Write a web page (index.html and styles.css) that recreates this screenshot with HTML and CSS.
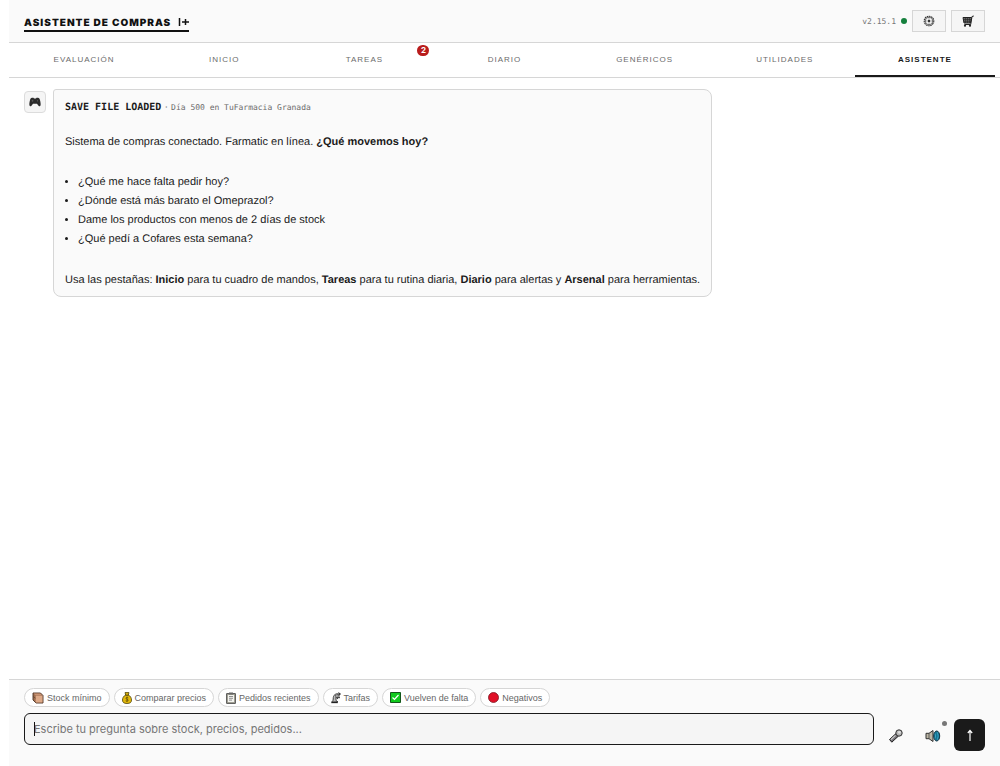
FILE: index.html
```html
<!DOCTYPE html>
<html lang="es">
<head>
<meta charset="utf-8">
<meta name="viewport" content="width=device-width, initial-scale=1">
<title>Asistente de compras</title>
<link rel="stylesheet" href="styles.css">
</head>
<body>
<div class="app">
  <header class="topbar">
    <h1 class="brand"><span>ASISTENTE DE COMPRAS</span>
      <svg class="brand-mark" width="11" height="10" viewBox="0 0 11 10" aria-hidden="true"><path d="M1.500 0v8M4 4h7M7.500 1v6" stroke="currentColor" stroke-width="1.500" fill="none"/></svg>
    </h1>
    <div class="tools">
      <span class="version">v2.15.1</span>
      <span class="status"></span>
      <button class="tool" type="button" aria-label="Ajustes">
        <svg width="12" height="12" viewBox="0 0 12 12" fill="none" stroke="#333"><circle cx="6" cy="6" r="4.800" stroke-width="1.100" stroke-dasharray="1.600 .6"/><circle cx="6" cy="6" r="3.800" stroke-width=".7"/><circle cx="6" cy="6" r="1.200" fill="#333" stroke="none"/><path d="M6 2.300v2.500M6 7.200v2.500M2.300 6h2.500M7.200 6h2.500" stroke-width=".4"/></svg>
      </button>
      <button class="tool" type="button" aria-label="Carrito">
        <svg width="12" height="12" viewBox="0 0 12 12" fill="none" stroke="#222"><path d="M1 2.500h8.500L8.500 8H2z" fill="#888"/><path d="M1.300 4.300h7.700M1.700 6.200h7M3.300 2.500V8M5.300 2.500V8M7.300 2.500V8" stroke-width=".8"/><path d="M11.800 1 10 1.500 8.700 9.500H2.500"/><circle cx="3" cy="10.700" r="1.100" fill="#222" stroke="none"/><circle cx="8" cy="10.700" r="1.100" fill="#222" stroke="none"/></svg>
      </button>
    </div>
  </header>

  <nav class="tabs">
    <button class="tab" type="button">EVALUACIÓN</button>
    <button class="tab" type="button">INICIO</button>
    <button class="tab" type="button">TAREAS<span class="badge">2</span></button>
    <button class="tab" type="button">DIARIO</button>
    <button class="tab" type="button">GENÉRICOS</button>
    <button class="tab" type="button">UTILIDADES</button>
    <button class="tab tab-active" type="button">ASISTENTE</button>
  </nav>

  <main class="chat">
    <div class="avatar">
      <svg width="12" height="10" viewBox="0 0 12 10"><path d="M3 .8h1.500l.5.600h2l.5-.6H9c1.200 0 1.700 1 2.100 2.800.4 1.700.8 3.700.4 5-.4 1-1.400.8-2 .1L8 6.800H4L2.500 8.700c-.6.7-1.600.9-2-.1-.4-1.300 0-3.300.4-5C1.300 1.800 1.800.8 3 .8z" fill="#2b2b2b"/><path d="M2.500 3.800h2M3.500 2.800v2" stroke="#666" stroke-width=".6"/><circle cx="8.500" cy="3.800" r=".6" fill="#666"/></svg>
    </div>
    <article class="message">
      <p class="message-head"><strong>SAVE FILE LOADED</strong> · <small>Día 500 en TuFarmacia Granada</small></p>
      <p class="message-intro">Sistema de compras conectado. Farmatic en línea. <strong>¿Qué movemos hoy?</strong></p>
      <ul class="examples">
        <li>¿Qué me hace falta pedir hoy?</li>
        <li>¿Dónde está más barato el Omeprazol?</li>
        <li>Dame los productos con menos de 2 días de stock</li>
        <li>¿Qué pedí a Cofares esta semana?</li>
      </ul>
      <p class="message-foot">Usa las pestañas: <strong>Inicio</strong> para tu cuadro de mandos, <strong>Tareas</strong> para tu rutina diaria, <strong>Diario</strong> para alertas y <strong>Arsenal</strong> para herramientas.</p>
    </article>
  </main>

  <footer class="composer">
    <div class="chips">
      <button class="chip" type="button"><svg width="12" height="12" viewBox="0 0 12 12"><path d="M1 1h7.500L11 3.500V11H4L1 8z" fill="#a06f50" stroke="#4a3023" stroke-width=".9"/><path d="M1.500 1.500h6.800l1.700 1.700H3.500z" fill="#c99273"/><path d="M3.700 3.700h6.800v6.800H3.700z" fill="#dda988"/><path d="M1.200 4.500l2.300 1.700" stroke="#5c3d2c" stroke-width=".7"/></svg>Stock mínimo</button>
      <button class="chip" type="button"><svg width="10" height="12" viewBox="0 0 10 12"><path d="M3 .6h4L6.300 3C8.500 4 9.500 6 9.500 8c0 2.500-1.500 3.500-4.500 3.500S.5 10.500.5 8c0-2 1-4 3.200-5z" fill="#e2b80c" stroke="#4d4108" stroke-width=".8"/><path d="M3.300 3.200h3.400" stroke="#4d4108"/><path d="M6.300 5.800C5.500 5 4 5.300 4 6.300s2.200.8 2.200 1.900S4.300 9.500 3.700 8.800M5 4.700v5" stroke="#5d4d08" stroke-width=".8" fill="none"/></svg>Comparar precios</button>
      <button class="chip" type="button"><svg width="10" height="12" viewBox="0 0 10 12"><path d="M.6 1.600h8.800v9.800H.6z" fill="#aaa99c" stroke="#444" stroke-width=".9"/><path d="M2 3h6v7H2z" fill="#f4f4f0"/><path d="M3 .5h4v2H3z" fill="#666"/><path d="M3 4.500h4M3 6.300h4M3 8.100h3" stroke="#777" stroke-width=".8"/></svg>Pedidos recientes</button>
      <button class="chip" type="button"><svg width="10" height="12" viewBox="0 0 10 12"><path d="M1.500 9.500c1-1.500.5-3.500 1-5C2.800 3 4 2.500 5 3v5.500l2 1.500" fill="#bbb" stroke="#333" stroke-width=".9"/><path d="M.3 10.300h6.500" stroke="#222" stroke-width="1.700"/><path d="M5.500 1.500h3.300v4.200H5.500z" fill="#999"/><path d="M4.500 2h5M7.500.500 9.300 2 7.500 3.700M9 5.700H5.500L7 7" fill="none" stroke="#222" stroke-width=".9"/></svg>Tarifas</button>
      <button class="chip" type="button"><svg width="11" height="11" viewBox="0 0 11 11"><path d="M.5.5h10v10H.5z" fill="#0fc91d" stroke="#12551a"/><path d="M2.500 5.500l2 2 4-4.500" fill="none" stroke="#fff" stroke-width="1.200"/></svg>Vuelven de falta</button>
      <button class="chip" type="button"><svg width="11" height="11" viewBox="0 0 11 11"><circle cx="5.500" cy="5.500" r="5" fill="#e01027" stroke="#7b1722" stroke-width=".8"/></svg>Negativos</button>
    </div>
    <form class="entry">
      <div class="field">
        <input class="question" type="text" aria-label="Pregunta" placeholder="Escribe tu pregunta sobre stock, precios, pedidos...">
      </div>
      <button class="action" type="button" aria-label="Dictar">
        <svg width="16" height="16" viewBox="0 0 16 16"><path d="M8.300 5.300 1.500 11.500 3.800 14.200 10.500 8z" fill="#77747a" stroke="#222"/><path d="M7.500 7.300 3 11.500" stroke="#ccc" stroke-width="1.100"/><circle cx="11" cy="5" r="3.200" fill="#b5b5b5" stroke="#333"/><circle cx="11.400" cy="4.300" r="1.400" fill="#ddd"/></svg>
      </button>
      <button class="action" type="button" aria-label="Voz">
        <svg width="16" height="14" viewBox="0 0 16 14"><path d="M1 4.300h3L8 1.500v11L4 9.700H1z" fill="#bcb6a5" stroke="#333"/><path d="M4 4.300v5.400" stroke="#444" stroke-width=".8"/><ellipse cx="11.700" cy="7" rx="3" ry="5" fill="#147392" stroke="#12303f"/><path d="M10 4.500q1.200 2.500 0 5M12.300 3.300q1.800 3.700 0 7.400" stroke="#4cb8d3" stroke-width=".7" fill="none"/></svg>
        <span class="voice-dot"></span>
      </button>
      <button class="send" type="submit" aria-label="Enviar">
        <svg width="8" height="12" viewBox="0 0 8 12"><path d="M4 12V2M1.800 4 4 1.500 6.200 4" fill="none" stroke="#fff" stroke-width="1.200"/></svg>
      </button>
    </form>
  </footer>
</div>
</body>
</html>
```
FILE: styles.css
```css
* { box-sizing: border-box; }

body {
  margin: 0;
  background: #fff;
  color: #1a1a1a;
  font-family: Inter, "Liberation Sans", sans-serif;
  text-rendering: geometricPrecision;
}

button, input { font: inherit; margin: 0; }
svg { display: block; flex: none; }
p { margin: 0; }

.app {
  display: flex;
  flex-direction: column;
  min-height: 100vh;
  margin-left: 9px;
}

.topbar {
  display: flex;
  align-items: center;
  justify-content: space-between;
  padding: 10px 15px;
  background: #fafafa;
  border-bottom: 1px solid #d6d6d6;
}

.brand {
  display: flex;
  align-items: center;
  gap: 7px;
  margin: 0;
  padding-top: 5px;
  border-bottom: 2px solid #111;
  color: #111;
  font-size: 10px;
  line-height: 14px;
  font-weight: 900;
  letter-spacing: 1px;
}

.tools { display: flex; align-items: center; gap: 5px; }

.version {
  color: #777;
  font-family: "DejaVu Sans Mono", monospace;
  font-size: 8px;
}

.status {
  width: 6px;
  height: 6px;
  border-radius: 50%;
  background: #15803d;
}

.tool {
  display: grid;
  place-items: center;
  width: 34px;
  height: 22px;
  padding: 0;
  background: #f5f5f5;
  border: 1px solid #d6d6d6;
}

.tabs {
  display: grid;
  grid-template-columns: repeat(7, 1fr);
  padding: 0 5px;
  border-bottom: 1px solid #d6d6d6;
}

.tab {
  position: relative;
  height: 34px;
  padding: 0;
  background: none;
  border: 0;
  border-bottom: 2px solid transparent;
  color: #6b6b6b;
  font-family: "Liberation Sans", Arial, sans-serif;
  font-size: 8px;
  letter-spacing: 1px;
}

.tab-active {
  border-bottom-color: #1a1a1a;
  color: #1a1a1a;
  font-weight: 700;
}

.badge {
  position: absolute;
  top: 2px;
  right: 5px;
  width: 12px;
  height: 11px;
  border-radius: 6px;
  background: #b91c1c;
  color: #fff;
  font-family: Inter, sans-serif;
  font-size: 8px;
  line-height: 11px;
  font-weight: 700;
  letter-spacing: 0;
}

.chat {
  display: flex;
  flex: 1;
  align-items: flex-start;
  gap: 7px;
  padding: 11px 15px;
}

.avatar {
  display: grid;
  place-items: center;
  width: 22px;
  height: 22px;
  margin-top: 2px;
  background: #f5f5f5;
  border: 1px solid #dcdcdc;
  border-radius: 4px;
}

.message {
  padding: 8px 11px 6px;
  background: #fafafa;
  border: 1px solid #d6d6d6;
  border-radius: 3px 8px 8px 8px;
  font-family: "Liberation Sans", Arial, sans-serif;
  font-size: 11px;
  line-height: 19px;
}

.message strong { font-weight: 700; }

.message-head { color: #6b6b6b; }

.message-head strong {
  color: #1a1a1a;
  font-family: "DejaVu Sans Mono", monospace;
  font-size: 10px;
}

.message-head small {
  font-family: "DejaVu Sans Mono", monospace;
  font-size: 8px;
}

.message-intro { margin-top: 16px; }

.examples {
  display: grid;
  margin: 21px 0 22px;
  padding-left: 13px;
}

.composer {
  padding: 8px 15px 15px;
  background: #fafafa;
  border-top: 1px solid #d6d6d6;
}

.chips { display: flex; flex-wrap: wrap; gap: 4px; }

.chip {
  display: flex;
  align-items: center;
  gap: 3px;
  height: 19px;
  padding: 0 7px;
  background: #fff;
  border: 1px solid #d6d6d6;
  border-radius: 10px;
  color: #666;
  font-family: "Liberation Sans", Arial, sans-serif;
  font-size: 9px;
}

.entry {
  display: flex;
  align-items: flex-end;
  gap: 6px;
  margin-top: 6px;
}

.field {
  position: relative;
  flex: 1;
  min-width: 0;
  margin-bottom: 6px;
}

/* Text caret shown while the field waits for a question */
.field::before {
  content: "";
  position: absolute;
  top: 9px;
  left: 10px;
  width: 1px;
  height: 14px;
  background: #111;
}

.question {
  display: block;
  width: 100%;
  height: 32px;
  padding: 0 9px;
  background: #f5f5f5;
  border: 1px solid #1a1a1a;
  border-radius: 6px;
  outline: 0;
  font-size: 11px;
}

.question::placeholder { color: #757575; }

.action {
  position: relative;
  display: grid;
  place-items: center;
  width: 31px;
  height: 31px;
  padding: 0;
  background: none;
  border: 0;
}

.voice-dot {
  position: absolute;
  top: 1px;
  right: 1px;
  width: 5px;
  height: 5px;
  border-radius: 50%;
  background: #777;
}

.send {
  display: grid;
  place-items: center;
  width: 31px;
  height: 32px;
  padding: 0;
  background: #1a1a1a;
  border: 0;
  border-radius: 6px;
}
```
